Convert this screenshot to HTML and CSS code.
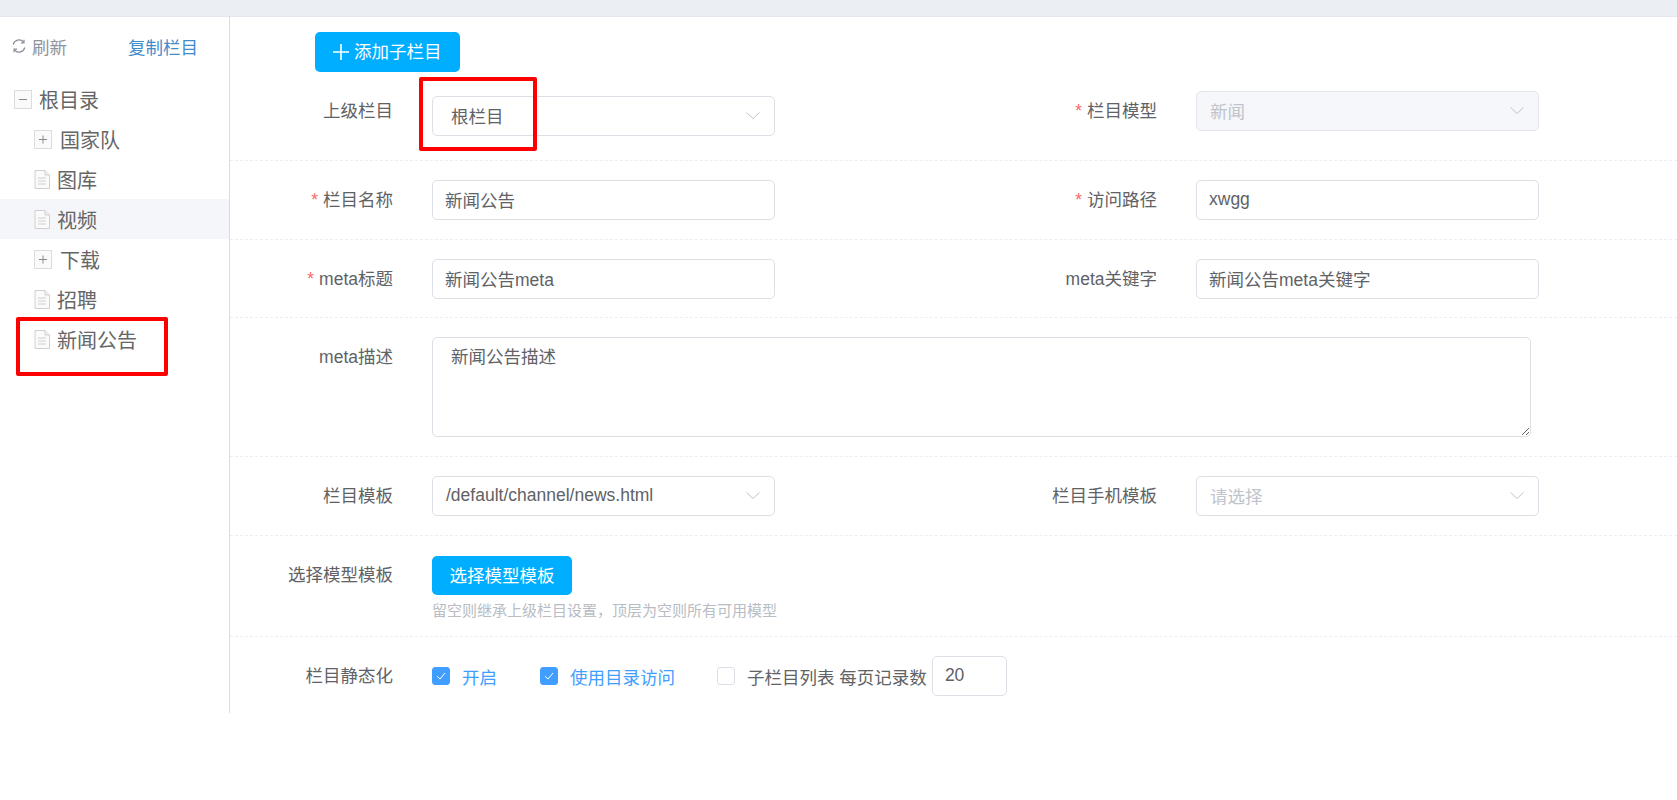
FILE: index.html
```html
<!DOCTYPE html>
<html lang="zh-CN">
<head>
<meta charset="utf-8">
<title>栏目管理</title>
<link rel="stylesheet" href="styles.css">
</head>
<body>
<div class="topbar"></div>
<div class="app">
  <aside class="sidebar">
    <div class="side-tools">
      <span class="refresh">
        <svg class="refresh-icon" viewBox="0 0 14 14" width="14" height="14"><path d="M1.200 5.500A6 6 0 0 1 11.500 3M12.800 8.500A6 6 0 0 1 2.500 11" fill="none" stroke="#8a8f99" stroke-width="1.200"/><path d="M12 .8v3H9M2 13.200v-3h3" fill="none" stroke="#8a8f99" stroke-width="1.200"/></svg>
        刷新
      </span>
      <a class="copy-link">复制栏目</a>
    </div>
    <ul class="tree">
      <li class="node root"><span class="toggle"><svg viewBox="0 0 18 19" width="18" height="19"><path d="M5 9.500h8" stroke="#888" stroke-width="1"/></svg></span><span>根目录</span></li>
      <li class="node branch"><span class="toggle"><svg viewBox="0 0 18 19" width="18" height="19"><path d="M5 9.500h8M9 5.500v8" stroke="#888" stroke-width="1"/></svg></span><span>国家队</span></li>
      <li class="node leaf"><svg class="file" viewBox="0 0 16 19" width="16" height="19"><path d="M1 .5h10l4.500 4.500v13.500H1z" fill="#fafafa" stroke="#d0d0d0"/><path d="M11 .5v4.500h4.500" fill="#eee" stroke="#d0d0d0"/><path d="M4 8h8M4 11h8M4 14h8" stroke="#cfcfcf" stroke-width="1.200"/></svg><span>图库</span></li>
      <li class="node leaf active"><svg class="file" viewBox="0 0 16 19" width="16" height="19"><path d="M1 .5h10l4.500 4.500v13.500H1z" fill="#fafafa" stroke="#d0d0d0"/><path d="M11 .5v4.500h4.500" fill="#eee" stroke="#d0d0d0"/><path d="M4 8h8M4 11h8M4 14h8" stroke="#cfcfcf" stroke-width="1.200"/></svg><span>视频</span></li>
      <li class="node branch"><span class="toggle"><svg viewBox="0 0 18 19" width="18" height="19"><path d="M5 9.500h8M9 5.500v8" stroke="#888" stroke-width="1"/></svg></span><span>下载</span></li>
      <li class="node leaf"><svg class="file" viewBox="0 0 16 19" width="16" height="19"><path d="M1 .5h10l4.500 4.500v13.500H1z" fill="#fafafa" stroke="#d0d0d0"/><path d="M11 .5v4.500h4.500" fill="#eee" stroke="#d0d0d0"/><path d="M4 8h8M4 11h8M4 14h8" stroke="#cfcfcf" stroke-width="1.200"/></svg><span>招聘</span></li>
      <li class="node leaf"><svg class="file" viewBox="0 0 16 19" width="16" height="19"><path d="M1 .5h10l4.500 4.500v13.500H1z" fill="#fafafa" stroke="#d0d0d0"/><path d="M11 .5v4.500h4.500" fill="#eee" stroke="#d0d0d0"/><path d="M4 8h8M4 11h8M4 14h8" stroke="#cfcfcf" stroke-width="1.200"/></svg><span>新闻公告</span></li>
    </ul>
    <div class="mark mark-tree"></div>
  </aside>
  <main class="main">
    <div class="main-tools">
      <button class="btn btn-add"><svg viewBox="0 0 16 16" width="16" height="16"><path d="M8 0v16M0 8h16" stroke="#fff" stroke-width="1.600"/></svg><span class="btn-text">添加子栏目</span></button>
    </div>
    <form class="form">
      <div class="row row-first two">
        <div class="field">
          <label class="label">上级栏目</label>
          <div class="control select shifted"><span class="select-root">根栏目</span><svg class="chevron" viewBox="0 0 14 7" width="14" height="7"><path d="M.5.5 7 6.500 13.500.5" fill="none" stroke="#c0c4cc"/></svg></div>
          <div class="mark mark-select"></div>
        </div>
        <div class="field">
          <label class="label"><i class="req">*</i>栏目模型</label>
          <div class="control select disabled"><span>新闻</span><svg class="chevron" viewBox="0 0 14 7" width="14" height="7"><path d="M.5.5 7 6.500 13.500.5" fill="none" stroke="#c0c4cc"/></svg></div>
        </div>
      </div>
      <div class="row two">
        <div class="field"><label class="label"><i class="req">*</i>栏目名称</label><div class="control">新闻公告</div></div>
        <div class="field"><label class="label"><i class="req">*</i>访问路径</label><div class="control">xwgg</div></div>
      </div>
      <div class="row row-tight two">
        <div class="field"><label class="label"><i class="req">*</i>meta标题</label><div class="control">新闻公告meta</div></div>
        <div class="field"><label class="label">meta关键字</label><div class="control">新闻公告meta关键字</div></div>
      </div>
      <div class="row row-loose">
        <div class="field"><label class="label">meta描述</label><textarea class="area">新闻公告描述</textarea></div>
      </div>
      <div class="row two">
        <div class="field">
          <label class="label">栏目模板</label>
          <div class="control select"><span>/default/channel/news.html</span><svg class="chevron" viewBox="0 0 14 7" width="14" height="7"><path d="M.5.5 7 6.500 13.500.5" fill="none" stroke="#c0c4cc"/></svg></div>
        </div>
        <div class="field">
          <label class="label">栏目手机模板</label>
          <div class="control select placeholder"><span>请选择</span><svg class="chevron" viewBox="0 0 14 7" width="14" height="7"><path d="M.5.5 7 6.500 13.500.5" fill="none" stroke="#c0c4cc"/></svg></div>
        </div>
      </div>
      <div class="row row-model">
        <div class="field">
          <label class="label label-model">选择模型模板</label>
          <div class="stack">
            <button type="button" class="btn btn-model"><span class="btn-text-sm">选择模型模板</span></button>
            <p class="hint">留空则继承上级栏目设置，顶层为空则所有可用模型</p>
          </div>
        </div>
      </div>
      <div class="row row-last">
        <div class="field">
          <label class="label">栏目静态化</label>
          <div class="checks">
            <span class="check on"><span class="box"><svg viewBox="0 0 18 18" width="18" height="18"><path d="M5 9.200 8 12l5-6" fill="none" stroke="#fff"/></svg></span>开启</span>
            <span class="check on"><span class="box"><svg viewBox="0 0 18 18" width="18" height="18"><path d="M5 9.200 8 12l5-6" fill="none" stroke="#fff"/></svg></span>使用目录访问</span>
            <span class="check"><span class="box"></span>子栏目列表 每页记录数</span>
            <div class="control count">20</div>
          </div>
        </div>
      </div>
    </form>
  </main>
</div>
</body>
</html>
```
FILE: styles.css
```css
* { box-sizing: border-box; }
html, body { margin: 0; padding: 0; }
body {
  height: 800px;
  overflow: hidden;
  background: #fff;
  color: #606266;
  font-family: "Liberation Sans", "Noto Sans CJK SC", sans-serif;
  font-size: 17.5px;
}
.topbar { height: 17px; background: #ebeef3; border-bottom: 1px solid #e4e8ee; margin-bottom: -1px; }
.app { display: flex; align-items: flex-start; }

.sidebar {
  position: relative;
  flex: none;
  width: 230px;
  height: 697px;
  border-right: 1px solid #d8dce5;
}
.side-tools {
  display: flex;
  align-items: center;
  height: 60px;
  margin-bottom: 3px;
  padding-left: 12px;
}
.refresh { display: flex; align-items: center; color: #8f939b; font-size: 17.5px; width: 117px; }
.refresh-icon { margin-right: 6px; }
.copy-link { color: #428bca; font-size: 17.5px; margin-left: -1px; }
.tree { list-style: none; margin: 0; padding: 0; font-size: 20px; color: #666; }
.node { display: flex; align-items: center; height: 40px; }
.root { padding-left: 14px; }
.root .toggle { margin-right: 7px; }
.branch, .leaf { padding-left: 34px; }
.active { background: #f5f6fa; }
.toggle {
  display: block;
  width: 18px;
  height: 19px;
  margin-right: 8px;
  border: 1px solid #dcdcdc;
  background: #fafafa;
}
.toggle svg { display: block; margin: -1px; }
.file { flex: none; margin-right: 7px; }

.main { flex: 1; min-width: 0; }
.main-tools { display: flex; padding: 16px 0 0 85px; }
.btn {
  display: inline-flex;
  align-items: center;
  border: 0;
  border-radius: 5px;
  background: #00aeff;
  color: #fff;
  font: inherit;
  padding: 0;
}
.btn-add { width: 145px; height: 40px; padding-left: 18px; }
.btn-add svg { margin-right: 5px; }
.btn-text { padding-bottom: 3px; }
.btn-text-sm { padding-bottom: 2px; }
.btn-model { width: 140px; height: 39px; justify-content: center; }

.row { display: flex; padding: 19px 0; border-bottom: 1px dashed #ebeef5; }
.row-first { padding-bottom: 24px; }
.row-tight { padding-bottom: 18px; }
.row-loose { padding-bottom: 19px; }
.row-model { padding: 20px 0 0; height: 101px; }
.row-last { border-bottom: 0; }
.row.two .field { flex: none; width: 764px; }
.field { position: relative; display: flex; align-items: flex-start; }
.label {
  flex: none;
  width: 163px;
  margin-right: 39px;
  line-height: 40px;
  text-align: right;
}
.label-model { line-height: 38px; }
.req { margin-right: 5px; color: #f56c6c; font-style: normal; }
.control {
  display: flex;
  align-items: center;
  justify-content: space-between;
  flex: none;
  width: 343px;
  height: 40px;
  padding: 0 14px 2px 12px;
  border: 1px solid #dcdfe6;
  border-radius: 5px;
  background: #fff;
}
.select { padding-left: 13px; }
.shifted { margin-top: 5px; }
.select-root { padding-left: 5px; }
.disabled { background: #f5f7fa; border-color: #e4e7ed; color: #c0c4cc; }
.placeholder { color: #c0c4cc; }
.area {
  display: block;
  width: 1099px;
  height: 100px;
  padding: 6px 18px;
  border: 1px solid #dcdfe6;
  border-radius: 5px;
  color: #606266;
  font: inherit;
  line-height: 1.500;
  resize: vertical;
}
.stack { display: flex; flex-direction: column; align-items: flex-start; }
.hint { margin: 6px 0 0; color: #b8bcc4; font-size: 15px; line-height: 20px; }

.checks { display: flex; align-items: center; height: 40px; }
.check { display: flex; align-items: center; }
.check.on { color: #409eff; margin-right: 43px; }
.check:not(.on) { margin: 0 5px 0 -1px; }
.box {
  flex: none;
  width: 18px;
  height: 18px;
  margin-right: 12px;
  border: 1px solid #dcdfe6;
  border-radius: 3px;
  background: #fff;
}
.on .box { border-color: #409eff; background: #409eff; }
.box svg { display: block; margin: -1px; }
.count { width: 75px; }

.mark { position: absolute; border: 4px solid #ff0000; border-radius: 2px; pointer-events: none; }
.mark-tree { left: 16px; top: 301px; width: 152px; height: 59px; }
.mark-select { left: 189px; top: -14px; width: 118px; height: 74px; }
```
